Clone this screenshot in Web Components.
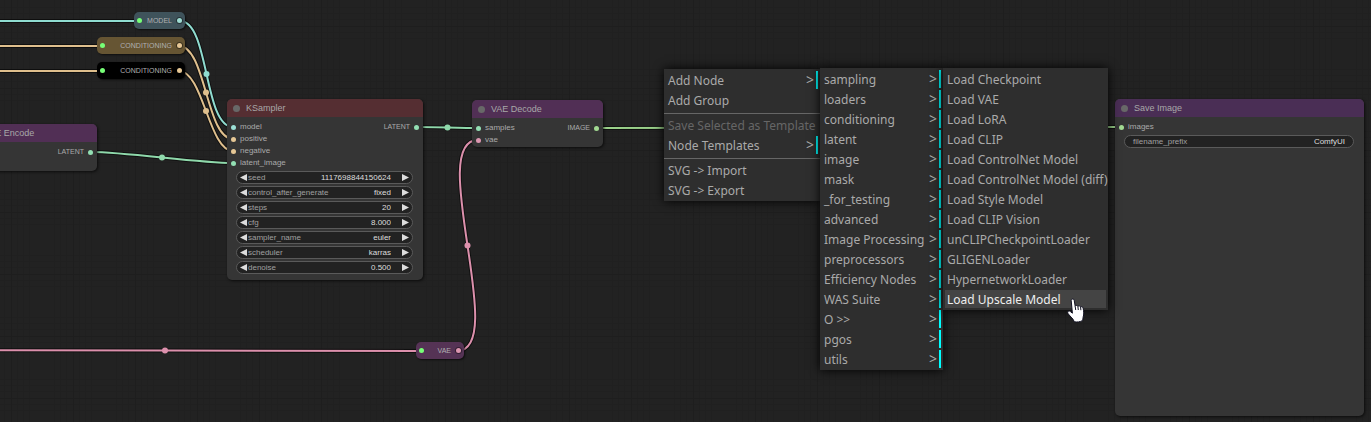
<!DOCTYPE html>
<html lang="en">
<head>
<meta charset="utf-8">
<title>Node graph</title>
<style>
  html, body { margin: 0; height: 100%; background: #222; overflow: hidden; }
</style>
</head>
<body>
<graph-canvas>
  <graph-wires></graph-wires>

  <reroute-node label="MODEL" at="134 12" w="51" color="#3f535b" pin="#9fdcd3"></reroute-node>
  <reroute-node label="CONDITIONING" at="97 37" w="88" color="#665533" pin="#e6c795"></reroute-node>
  <reroute-node label="CONDITIONING" at="97 62" w="88" color="#000" pin="#e6c795"></reroute-node>
  <reroute-node label="VAE" at="416 342" w="48" color="#553355" pin="#dc96b0"></reroute-node>

  <graph-node heading="VAE Encode" at="-35 124" w="132" color="#512f55">
    <node-slot slot="out" label="LATENT" color="#93dfb3"></node-slot>
    <node-slot slot="in" label="" color="#353535"></node-slot>
    <node-slot slot="in" label="" color="#353535"></node-slot>
  </graph-node>

  <graph-node heading="KSampler" at="227 99" w="196" color="#552e32">
    <node-slot slot="in" label="model" color="#9be0d6"></node-slot>
    <node-slot slot="in" label="positive" color="#e6c795"></node-slot>
    <node-slot slot="in" label="negative" color="#e6c795"></node-slot>
    <node-slot slot="in" label="latent_image" color="#93dfb3"></node-slot>
    <node-slot slot="out" label="LATENT" color="#93dfb3"></node-slot>
    <node-widget label="seed" value="1117698844150624" kind="step"></node-widget>
    <node-widget label="control_after_generate" value="fixed" kind="combo"></node-widget>
    <node-widget label="steps" value="20" kind="step"></node-widget>
    <node-widget label="cfg" value="8.000" kind="step"></node-widget>
    <node-widget label="sampler_name" value="euler" kind="combo"></node-widget>
    <node-widget label="scheduler" value="karras" kind="combo"></node-widget>
    <node-widget label="denoise" value="0.500" kind="step"></node-widget>
  </graph-node>

  <graph-node heading="VAE Decode" at="472 100" w="131" color="#512f55">
    <node-slot slot="in" label="samples" color="#93dfb3"></node-slot>
    <node-slot slot="in" label="vae" color="#dc96b0"></node-slot>
    <node-slot slot="out" label="IMAGE" color="#a2da92"></node-slot>
  </graph-node>

  <graph-node heading="Save Image" at="1115 99" w="249" h="317" color="#4a2e55">
    <node-slot slot="in" label="images" color="#a2da92"></node-slot>
    <node-widget label="filename_prefix" value="ComfyUI" kind="text"></node-widget>
  </graph-node>

  <context-menu at="664 69" w="156">
    <menu-entry submenu>Add Node</menu-entry>
    <menu-entry>Add Group</menu-entry>
    <menu-separator></menu-separator>
    <menu-entry disabled>Save Selected as Template</menu-entry>
    <menu-entry submenu>Node Templates</menu-entry>
    <menu-separator></menu-separator>
    <menu-entry>SVG -&gt; Import</menu-entry>
    <menu-entry>SVG -&gt; Export</menu-entry>
  </context-menu>

  <context-menu at="820 68" w="123">
    <menu-entry submenu>sampling</menu-entry>
    <menu-entry submenu>loaders</menu-entry>
    <menu-entry submenu>conditioning</menu-entry>
    <menu-entry submenu>latent</menu-entry>
    <menu-entry submenu>image</menu-entry>
    <menu-entry submenu>mask</menu-entry>
    <menu-entry submenu>_for_testing</menu-entry>
    <menu-entry submenu>advanced</menu-entry>
    <menu-entry submenu>Image Processing</menu-entry>
    <menu-entry submenu>preprocessors</menu-entry>
    <menu-entry submenu>Efficiency Nodes</menu-entry>
    <menu-entry submenu>WAS Suite</menu-entry>
    <menu-entry submenu>O &gt;&gt;</menu-entry>
    <menu-entry submenu>pgos</menu-entry>
    <menu-entry submenu>utils</menu-entry>
  </context-menu>

  <context-menu at="943 68" w="165">
    <menu-entry>Load Checkpoint</menu-entry>
    <menu-entry>Load VAE</menu-entry>
    <menu-entry>Load LoRA</menu-entry>
    <menu-entry>Load CLIP</menu-entry>
    <menu-entry>Load ControlNet Model</menu-entry>
    <menu-entry>Load ControlNet Model (diff)</menu-entry>
    <menu-entry>Load Style Model</menu-entry>
    <menu-entry>Load CLIP Vision</menu-entry>
    <menu-entry>unCLIPCheckpointLoader</menu-entry>
    <menu-entry>GLIGENLoader</menu-entry>
    <menu-entry>HypernetworkLoader</menu-entry>
    <menu-entry active>Load Upscale Model</menu-entry>
  </context-menu>

  <hand-pointer at="1066 298"></hand-pointer>
</graph-canvas>

<script>
  // Base class: renders a template string into an open shadow root.
  class Base extends HTMLElement {
    connectedCallback() {
      if (this.shadowRoot) return;
      const at = this.getAttribute('at');
      if (at) {
        const [x, y] = at.split(' ');
        this.style.left = x + 'px';
        this.style.top = y + 'px';
      }
      for (const key of ['w', 'h']) {
        if (this.hasAttribute(key)) this.style.setProperty('--' + key, this.getAttribute(key) + 'px');
      }
      if (this.hasAttribute('color')) this.style.setProperty('--color', this.getAttribute('color'));
      if (this.hasAttribute('pin')) this.style.setProperty('--pin', this.getAttribute('pin'));
      const t = document.createElement('template');
      t.innerHTML = this.view();
      this.attachShadow({ mode: 'open' }).append(t.content.cloneNode(true));
    }
    attr(name) { return this.getAttribute(name) || ''; }
  }

  customElements.define('graph-canvas', class extends Base {
    view() {
      return `<style>
        :host { display: block; position: relative; height: 100vh; overflow: hidden;
          font-family: "Liberation Sans", Arial, sans-serif; }
        .grid { position: absolute; inset: 0; width: 100%; height: 100%; }
      </style>
      <svg class="grid" aria-hidden="true">
        <defs><pattern id="g" x="11" y="26" width="62" height="62" patternUnits="userSpaceOnUse">
          <path d="M6.5 0V62M12.5 0V62M18.5 0V62M43.5 0V62M49.5 0V62M55.5 0V62M0 6.5H62M0 12.5H62M0 43.5H62M0 49.5H62M0 55.5H62" stroke="#202020"/>
          <path d="M.5 0V62M0 .5H62" stroke="#1e1e1e"/>
        </pattern></defs>
        <rect width="100%" height="100%" fill="url(#g)"/>
      </svg>
      <slot></slot>`;
    }
  });

  customElements.define('graph-wires', class extends Base {
    view() {
      const wires = [
        [-200, 21, 140, 21, '#8fdcd0'],
        [-200, 46, 103, 46, '#dfbf8d'],
        [-200, 71, 103, 71, '#dfbf8d'],
        [180, 21, 233, 127, '#8fdcd0'],
        [179, 46, 233, 139, '#dfbf8d'],
        [179, 71, 233, 151, '#dfbf8d'],
        [91, 152, 233, 163, '#8fd9ab'],
        [417, 127, 478, 128, '#8fd9ab'],
        [597, 128, 1121, 127, '#9ad18a'],
        [-92, 350, 422, 351, '#dc90ac'],
        [457, 351, 478, 140, '#dc90ac']
      ];
      const parts = wires.map(([x1, y1, x2, y2, c]) => {
        const k = Math.hypot(x2 - x1, y2 - y1) / 4;
        const d = `M${x1} ${y1}C${x1 + k} ${y1} ${x2 - k} ${y2} ${x2} ${y2}`;
        return `<path d="${d}" stroke="#000" stroke-opacity=".55" stroke-width="4"/>
          <path d="${d}" stroke="${c}" stroke-width="2"/>
          <circle cx="${(x1 + x2) / 2}" cy="${(y1 + y2) / 2}" r="3" fill="${c}"/>`;
      }).join('');
      return `<style>
        :host { display: block; position: absolute; inset: 0; }
        svg { display: block; width: 100%; height: 100%; }
      </style><svg fill="none" aria-hidden="true">${parts}</svg>`;
    }
  });

  customElements.define('reroute-node', class extends Base {
    view() {
      return `<style>
        :host { position: absolute; display: flex; align-items: center; box-sizing: border-box;
          width: var(--w); height: 17px; padding: 0 3px; border-radius: 5px;
          background: var(--color); box-shadow: 1px 1px 2px #0009;
          font-size: 7px; line-height: 18px; color: #b0b0b0; }
        i { width: 5px; height: 5px; border-radius: 50%; background: #7f7; }
        i + span + i { background: var(--pin); box-shadow: 0 0 0 1px #0006; }
        span { flex: 1; text-align: right; padding-right: 5px; white-space: nowrap; }
      </style><i></i><span>${this.attr('label')}</span><i></i>`;
    }
  });

  customElements.define('graph-node', class extends Base {
    view() {
      return `<style>
        :host { position: absolute; display: flex; flex-direction: column; box-sizing: border-box;
          width: var(--w); min-height: var(--h, auto); border-radius: 5px; background: #353535;
          box-shadow: 1px 1px 3px #000a; }
        header { display: flex; align-items: center; gap: 6px; height: 18px; padding: 0 6px;
          border-radius: 5px 5px 0 0; background: var(--color); color: #a8a8a8; font-size: 9px; }
        header i { width: 7px; height: 7px; border-radius: 50%; background: #686868; }
        h2 { margin: 0; font: inherit; line-height: 18px; }
        .slots { display: flex; justify-content: space-between; padding: 4px 4px 1px; }
        .widgets { display: grid; gap: 2px; padding: 1px 10px 6px 9px; }
        .widgets.none { padding: 0; }
      </style>
      <header><i></i><h2>${this.attr('heading')}</h2></header>
      <div class="slots"><div><slot name="in"></slot></div><div><slot name="out"></slot></div></div>
      <div class="widgets ${this.querySelector('node-widget') ? '' : 'none'}"><slot></slot></div>`;
    }
  });

  customElements.define('node-slot', class extends Base {
    view() {
      return `<style>
        :host { display: flex; align-items: center; gap: 4px; height: 12px;
          font-size: 8px; line-height: 12px; color: #aaa; }
        :host([slot="out"]) { flex-direction: row-reverse; font-size: 7px; }
        i { width: 5px; height: 5px; border-radius: 50%; background: var(--color); }
      </style><i></i><span>${this.attr('label')}</span>`;
    }
  });

  customElements.define('node-widget', class extends Base {
    view() {
      const kind = this.attr('kind'), value = this.attr('value'), label = this.attr('label');
      const stepper = kind !== 'text';
      const arrow = (name, d) => stepper
        ? `<button type="button" aria-label="${name} ${label}"><svg width="7" height="7" viewBox="0 0 7 7"><path d="${d}"/></svg></button>` : '';
      const field = kind === 'combo'
        ? `<select id="f"><option>${value}</option></select>`
        : `<input id="f" type="text" value="${value}">`;
      return `<style>
        :host { display: flex; align-items: center; box-sizing: border-box; height: 13px;
          padding: 0 3px; border: 1px solid #5a5a5a; border-radius: 7px; background: #222;
          font-size: 8px; color: #a0a0a0; }
        button { display: flex; padding: 0; border: 0; background: none; }
        path { fill: #ddd; }
        label { line-height: 11px; padding-left: ${stepper ? 1 : 5}px; }
        input, select { flex: 1; min-width: 0; width: 0; height: 11px; margin: 0; padding: 0;
          border: 0; outline: 0; appearance: none; background: none; color: #ddd;
          font: inherit; line-height: 11px; text-align: right; text-align-last: right;
          padding-right: ${stepper ? 11 : 5}px; }
      </style>
      ${arrow('Decrease', 'M7 0V7L0 3.5Z')}
      <label for="f">${label}</label>${field}
      ${arrow('Increase', 'M0 0V7L7 3.5Z')}`;
    }
  });

  customElements.define('context-menu', class extends Base {
    view() {
      return `<style>
        :host { position: absolute; display: flex; flex-direction: column; gap: 2px;
          box-sizing: border-box; width: var(--w); padding: 2px 0; background: #2e2e2e;
          box-shadow: 0 0 10px #000; font-family: "Noto Sans", Tahoma, sans-serif; font-size: 12px; }
      </style><slot></slot>`;
    }
  });

  customElements.define('menu-separator', class extends Base {
    view() {
      return `<style>:host { display: block; height: 2px; border-bottom: 1px solid #666; }</style>`;
    }
  });

  customElements.define('menu-entry', class extends Base {
    view() {
      const sub = this.hasAttribute('submenu');
      return `<style>
        :host { display: block; padding: 0 2px; }
        button { display: flex; justify-content: space-between; align-items: flex-start;
          box-sizing: border-box; width: 100%; height: 18px; margin: 0; padding: 0 2px; border: 0;
          background: none; color: #aaa; font: inherit; line-height: 20px; text-align: left;
          white-space: nowrap; }
        .sub { border-right: 2px solid #0ff; }
        .more { line-height: 18px; font-size: 14px; }
        :host([disabled]) button { color: #666; }
        :host([active]) button { background: #444; color: #eee; }
      </style>
      <button type="button" class="${sub ? 'sub' : ''}" ${this.hasAttribute('disabled') ? 'disabled' : ''}><span><slot></slot></span>${sub ? '<span class="more">&gt;</span>' : ''}</button>`;
    }
  });

  customElements.define('hand-pointer', class extends Base {
    view() {
      return `<style>:host { position: absolute; display: block; } svg { display: block; }</style>
      <svg width="20" height="26" viewBox="0 0 20 26" aria-hidden="true">
        <path d="M5.2 2.6C5 .8 7.8.4 8.2 2.3L9.2 8.3C9.8 7 11.6 7.1 11.9 8.5C12.5 7.5 14.3 7.7 14.6 9C15.4 8.3 16.9 8.7 17.1 10.2C17.8 13.6 18.1 16.2 17.1 19.2L16.7 22.4C14.2 24 10.8 24.3 8.2 23.7C7.6 20.9 4.6 19 2.2 15.8C.8 13.8 2.8 12.3 4.4 13.6L6.4 15.2Z" fill="#fff" stroke="#112"/>
        <path d="M9.2 8.3L9.7 12M11.9 8.5L12.3 12M14.6 9L14.9 12.2" fill="none" stroke="#112"/>
      </svg>`;
    }
  });
</script>
</body>
</html>
